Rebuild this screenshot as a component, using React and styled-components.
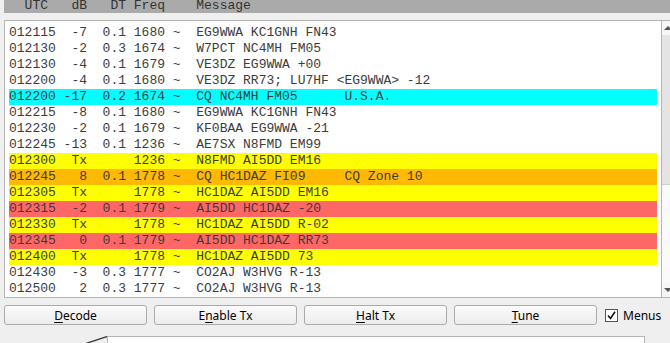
import React from 'react';
import styled, { createGlobalStyle } from 'styled-components';

const Global = createGlobalStyle`
  html, body { margin: 0; padding: 0; background: #efefef; overflow: hidden; }
  #root { width: 670px; height: 343px; overflow: hidden; }
`;

const mono = `"Liberation Mono", "Courier New", monospace`;
const sans = `"Noto Sans", "Open Sans", sans-serif`;

const Window = styled.div`
  width: 670px;
  height: 343px;
  overflow: hidden;
  background: #efefef;
  display: flex;
  flex-direction: column;
  padding-left: 4px;
  box-sizing: border-box;
`;

const HeaderBar = styled.div`
  flex: none;
  width: 680px;
  height: 13px;
  box-sizing: border-box;
  padding-left: 5px;
  background: #aaaaaa;
  font-family: ${mono};
  font-size: 13px;
  line-height: 12px;
  color: #333;
  white-space: pre;
  overflow: hidden;
`;

const ListBox = styled.div`
  flex: none;
  margin-top: 7px;
  width: 675px;
  height: 278px;
  box-sizing: border-box;
  border: 1px solid #b5b5b5;
  background: #fff;
  display: flex;
`;

const Rows = styled.div`
  flex: none;
  width: 648px;
  padding: 4px 4px 0 4px;
  overflow: hidden;
`;

const Row = styled.div`
  height: 16px;
  line-height: 16px;
  font-family: ${mono};
  font-size: 13px;
  color: #3c3c3c;
  white-space: pre;
  background: ${p => p.$bg || 'transparent'};
`;

const ScrollBar = styled.div`
  flex: none;
  width: 17px;
  border-left: 1px solid #b4b4b4;
  display: flex;
  flex-direction: column;
  background: #fafafa;
`;

const ArrowBtn = styled.div`
  height: 14px;
  flex: none;
  display: flex;
  align-items: center;
  padding-left: 2px;
  background: #f6f6f6;
`;

const Arrow = styled.div`
  width: 0;
  height: 0;
  border-left: 4px solid transparent;
  border-right: 4px solid transparent;
  ${p => p.$down
    ? 'border-top: 4px solid #555;'
    : 'border-bottom: 4px solid #555;'}
`;

const Thumb = styled.div`
  flex: none;
  height: 150px;
  background: #e4e4e4;
  border-bottom: 1px solid #cfcfcf;
  box-sizing: border-box;
`;

const Track = styled.div`
  flex: 1;
  background: #fafafa;
`;

const ButtonRow = styled.div`
  flex: none;
  margin-top: 7px;
  display: flex;
  align-items: center;
  gap: 7px;
`;

const Button = styled.button`
  width: 143px;
  height: 20px;
  box-sizing: border-box;
  padding: 1px 0 0 0;
  border: 1px solid #ababab;
  border-radius: 3px;
  background: linear-gradient(#fbfbfb, #ececec);
  font-family: ${sans};
  font-size: 12px;
  line-height: 17px;
  color: #000;
`;

const Key = styled.span`
  text-decoration: underline;
  text-underline-offset: 2px;
`;

const CheckLabel = styled.label`
  margin-left: 1px;
  display: flex;
  align-items: center;
  gap: 5px;
  font-family: ${sans};
  font-size: 12px;
  color: #000;
`;

const CheckBox = styled.span`
  width: 13px;
  height: 13px;
  box-sizing: border-box;
  border: 1px solid #555;
  background: #fff;
  display: flex;
  align-items: center;
  justify-content: center;
`;

const BottomRow = styled.div`
  flex: none;
  margin-top: 11px;
  display: flex;
  align-items: flex-start;
  padding-left: 82px;
`;

const Slant = styled.svg`
  flex: none;
`;

const Panel = styled.div`
  width: 538px;
  height: 20px;
  box-sizing: border-box;
  border: 1px solid #b5b5b5;
  background: #fff;
`;

const fmt = (utc, db, dt, freq, msg, extra) =>
  utc + ' ' + db.padStart(3) + '  ' + (dt || '   ') + ' ' + freq + ' ~  ' +
  (extra ? msg.padEnd(19) + extra : msg);

const CYAN = '#00ffff';
const YEL = '#ffff00';
const ORA = '#ffb900';
const RED = '#ff6666';

const rows = [
  [fmt('012115', '-7', '0.1', '1680', 'EG9WWA KC1GNH FN43')],
  [fmt('012130', '-2', '0.3', '1674', 'W7PCT NC4MH FM05')],
  [fmt('012130', '-4', '0.1', '1679', 'VE3DZ EG9WWA +00')],
  [fmt('012200', '-4', '0.1', '1680', 'VE3DZ RR73; LU7HF <EG9WWA> -12')],
  [fmt('012200', '-17', '0.2', '1674', 'CQ NC4MH FM05', 'U.S.A.'), CYAN],
  [fmt('012215', '-8', '0.1', '1680', 'EG9WWA KC1GNH FN43')],
  [fmt('012230', '-2', '0.1', '1679', 'KF0BAA EG9WWA -21')],
  [fmt('012245', '-13', '0.1', '1236', 'AE7SX N8FMD EM99')],
  [fmt('012300', 'Tx', '', '1236', 'N8FMD AI5DD EM16'), YEL],
  [fmt('012245', '8', '0.1', '1778', 'CQ HC1DAZ FI09', 'CQ Zone 10'), ORA],
  [fmt('012305', 'Tx', '', '1778', 'HC1DAZ AI5DD EM16'), YEL],
  [fmt('012315', '-2', '0.1', '1779', 'AI5DD HC1DAZ -20'), RED],
  [fmt('012330', 'Tx', '', '1778', 'HC1DAZ AI5DD R-02'), YEL],
  [fmt('012345', '0', '0.1', '1779', 'AI5DD HC1DAZ RR73'), RED],
  [fmt('012400', 'Tx', '', '1778', 'HC1DAZ AI5DD 73'), YEL],
  [fmt('012430', '-3', '0.3', '1777', 'CO2AJ W3HVG R-13')],
  [fmt('012500', '2', '0.3', '1777', 'CO2AJ W3HVG R-13')],
];

const buttons = [
  ['', 'D', 'ecode'],
  ['E', 'n', 'able Tx'],
  ['', 'H', 'alt Tx'],
  ['', 'T', 'une'],
];

export default function App() {
  return (
    <>
      <Global />
      <Window>
        <HeaderBar>{'  UTC   dB   DT Freq    Message'}</HeaderBar>
        <ListBox>
          <Rows>
            {rows.map(([text, bg], i) => (
              <Row key={i} $bg={bg}>{text}</Row>
            ))}
          </Rows>
          <ScrollBar>
            <ArrowBtn><Arrow /></ArrowBtn>
            <Thumb />
            <Track />
            <ArrowBtn><Arrow $down /></ArrowBtn>
          </ScrollBar>
        </ListBox>
        <ButtonRow>
          {buttons.map(([pre, key, post], i) => (
            <Button key={i}>{pre}<Key>{key}</Key>{post}</Button>
          ))}
          <CheckLabel>
            <CheckBox>
              <svg width="9" height="9" viewBox="0 0 9 9">
                <polyline points="1,4.5 3.5,7.5 8,0.8" fill="none" stroke="#111" strokeWidth="1.6" />
              </svg>
            </CheckBox>
            Menus
          </CheckLabel>
        </ButtonRow>
        <BottomRow>
          <Slant width="21" height="8" viewBox="0 0 21 8">
            <line x1="0" y1="7.5" x2="21" y2="0.5" stroke="#333" strokeWidth="1.2" />
          </Slant>
          <Panel />
        </BottomRow>
      </Window>
    </>
  );
}
